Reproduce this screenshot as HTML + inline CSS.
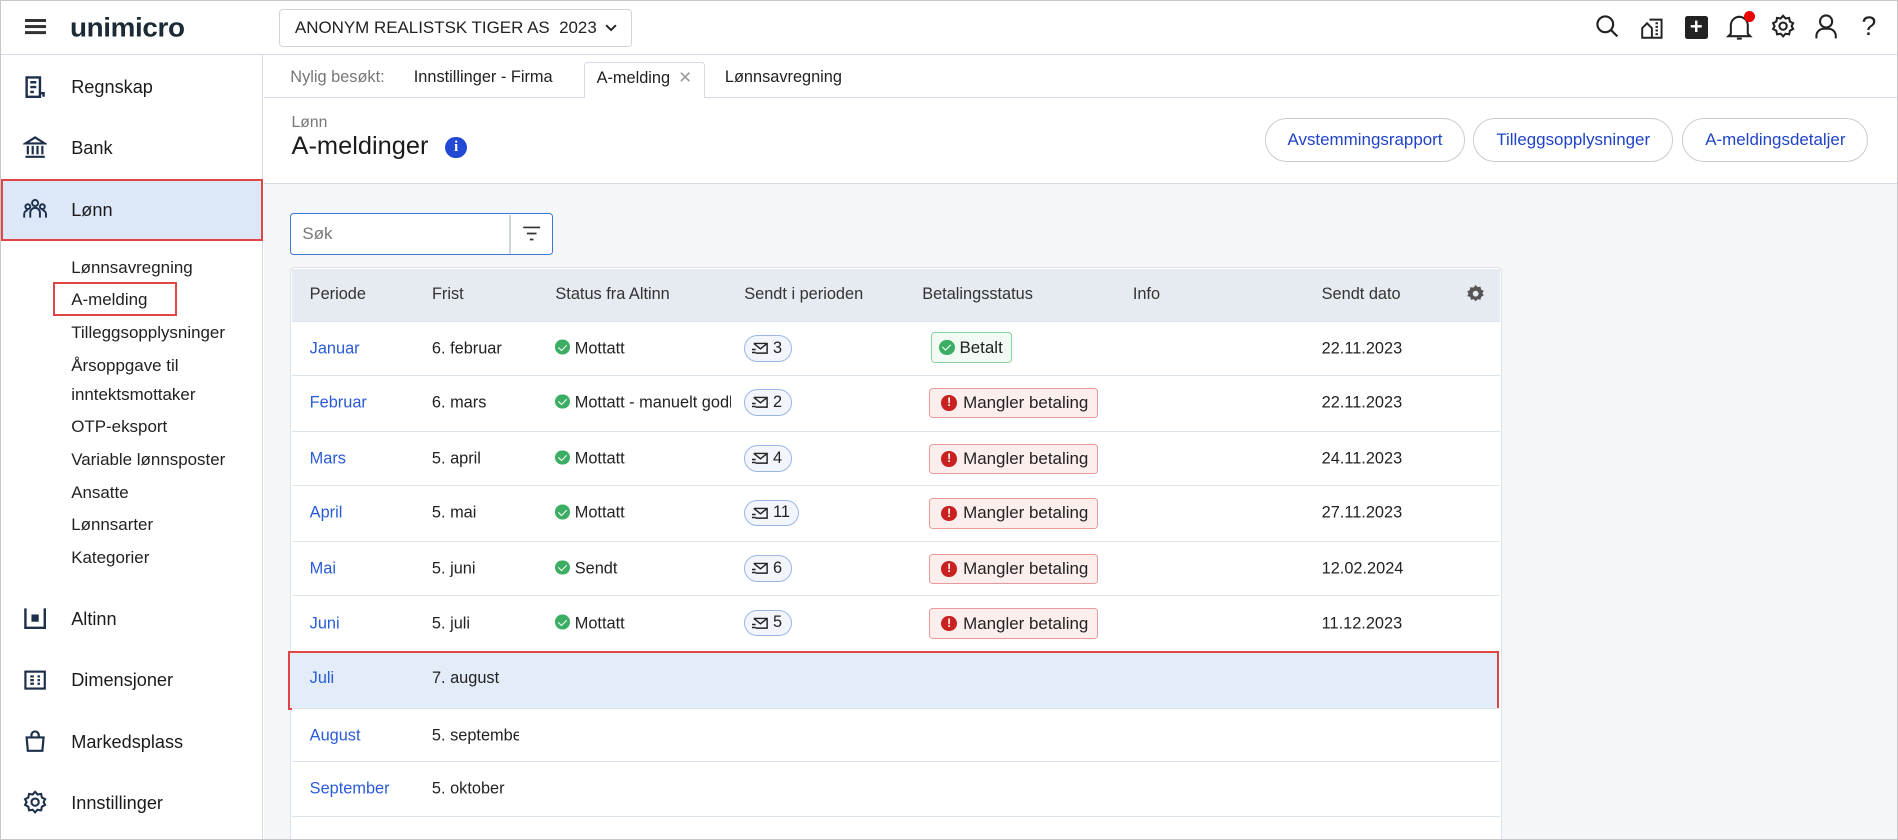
<!DOCTYPE html>
<html><head><meta charset="utf-8"><style>
html,body{margin:0;padding:0;width:1898px;height:840px;overflow:hidden;background:#fff}
#w{zoom:1.2105;width:1568px;height:694px;position:relative;font-family:"Liberation Sans",sans-serif;color:#222;font-size:14px;overflow:hidden;box-sizing:border-box;border:1px solid #c8c8c8}
.a{position:absolute}
.hdr{left:0;top:0;width:1568px;height:44px;border-bottom:1px solid #d5dbe3;background:#fff}
.side{left:0;top:45px;width:216px;height:650px;border-right:1px solid #d5dbe3;background:#fff}
.nav{position:absolute;left:58px;font-size:15px;color:#1b1b1b}
.sub{position:absolute;left:58px;font-size:14px;color:#222}
.ic{position:absolute;left:18px}
.blue{color:#2a5bd7}
.btn{position:absolute;top:97px;height:34px;border:1px solid #c8ccd2;border-radius:18px;color:#2043c8;font-size:14px;line-height:34px;text-align:center;background:#fff}
.th{position:absolute;top:235px;font-size:13.5px;color:#333}
.row{position:absolute;left:240px;width:998px;border-top:1px solid #dde3ea;background:#fff}
.c{position:absolute;font-size:13.5px;top:50%;transform:translateY(-50%);white-space:nowrap}
.ok{display:inline-block;width:12px;height:12px;border-radius:50%;background:#3cae63;vertical-align:-1px;margin-right:4px;position:relative}
.ok:after{content:"";position:absolute;left:4px;top:2px;width:3px;height:6px;border:solid #fff;border-width:0 1.5px 1.5px 0;transform:rotate(45deg)}
.env{position:absolute;height:22px;border:1px solid #9bb6e4;border-radius:11px;background:#f2f6fc;padding:0 7px 0 6px;font-size:13.5px;display:flex;align-items:center;gap:3px;box-sizing:border-box}
.bad{position:absolute;height:25px;border:1px solid #e89a9a;border-radius:3px;background:#fdeeee;padding:0 7px 0 9px;font-size:14px;display:flex;align-items:center;box-sizing:border-box}
.ex{display:inline-block;width:13px;height:13px;border-radius:50%;background:#c92020;color:#fff;font-size:10px;font-weight:bold;text-align:center;line-height:13px;margin-right:5px}
</style></head><body><div id="w">
<div class="a hdr">
 <div class="a" style="left:20px;top:15px;width:17px;height:2px;background:#333;box-shadow:0 5px 0 #333,0 10px 0 #333"></div>
 <div class="a" style="left:57px;top:9px;font-size:23px;font-weight:bold;color:#1b2a35;letter-spacing:-0.3px;transform:scaleY(0.95)">unimicro</div>
 <div class="a" style="left:230px;top:7px;width:290px;height:29px;border:1px solid #cfd4da;border-radius:3px;line-height:29px;font-size:14px;color:#222"><span style="margin-left:12px">ANONYM REALISTSK TIGER AS &nbsp;2023</span><svg style="position:absolute;right:12px;top:11px" width="10" height="7" viewBox="0 0 10 7" fill="none" stroke="#222" stroke-width="1.6"><path d="M1 1l4 4 4-4"/></svg></div>
 <svg class="a" style="left:1317px;top:11px" width="20" height="20" viewBox="0 0 20 20" fill="none" stroke="#222" stroke-width="1.8"><circle cx="8.5" cy="8.5" r="6.5"/><path d="M13.5 13.5l5 5"/></svg>
 <svg class="a" style="left:1355px;top:12px" width="19" height="19" viewBox="0 0 19 19" fill="none" stroke="#222" stroke-width="1.6"><path d="M7 3h10v15H1V10l4-4 4 4v8"/><path d="M12 6h2M12 9h2M12 12h2M12 15h2"/></svg>
 <div class="a" style="left:1391px;top:12px;width:19px;height:19px;background:#222;border-radius:2px;color:#fff;font-size:18px;line-height:18px;text-align:center;font-weight:bold">+</div>
 <svg class="a" style="left:1425px;top:9px" width="22" height="25" viewBox="0 0 22 25" fill="none" stroke="#222" stroke-width="1.7"><path d="M4 18V11a7 7 0 0 1 14 0v7l2 2H2z"/><path d="M9 22h4"/></svg>
 <div class="a" style="left:1440px;top:8px;width:9px;height:9px;border-radius:50%;background:#e00"></div>
 <svg class="a" style="left:1462px;top:11px" width="20" height="20" viewBox="0 0 20 20" fill="none" stroke="#222" stroke-width="1.7"><path d="M10 1.5l2 2.2 3-.5.6 3 2.7 1.4-1.3 2.4 1.3 2.4-2.7 1.4-.6 3-3-.5-2 2.2-2-2.2-3 .5-.6-3L1.7 12.4 3 10 1.7 7.6l2.7-1.4.6-3 3 .5z"/><circle cx="10" cy="10" r="3"/></svg>
 <svg class="a" style="left:1498px;top:10px" width="20" height="22" viewBox="0 0 20 22" fill="none" stroke="#222" stroke-width="1.7"><circle cx="10" cy="7" r="5"/><path d="M2 21v-2a6 6 0 0 1 6-6h4a6 6 0 0 1 6 6v2"/></svg>
 <div class="a" style="left:1537px;top:8px;font-size:22px;color:#222">?</div>
</div>
<div class="a side">
 <svg class="ic" style="top:16px" width="20" height="20" viewBox="0 0 20 20" fill="none" stroke="#1d2f4a" stroke-width="2"><path d="M3 2h11v16H3zM6 6h5M6 10h5M6 14h3M14 15h3v3"/></svg>
 <div class="nav" style="top:18px">Regnskap</div>
 <svg class="ic" style="top:66px" width="20" height="20" viewBox="0 0 20 20" fill="none" stroke="#1d2f4a" stroke-width="1.8"><path d="M2 7l8-5 8 5zM4 9v7M8 9v7M12 9v7M16 9v7M2 18h16"/></svg>
 <div class="nav" style="top:68px">Bank</div>
 <div class="a" style="left:0;top:102px;width:213px;height:48px;background:#dce7f8;border:2px solid #e04646"></div>
 <svg class="ic" style="top:117px" width="20" height="20" viewBox="0 0 20 20" fill="none" stroke="#1d2f4a" stroke-width="1.6"><circle cx="10" cy="5" r="2.5"/><circle cx="4" cy="8" r="2"/><circle cx="16" cy="8" r="2"/><path d="M6 17v-4a4 4 0 0 1 8 0v4M1 17v-3a3 3 0 0 1 3-3M19 17v-3a3 3 0 0 0-3-3"/></svg>
 <div class="nav" style="top:119px">Lønn</div>
 <div class="sub" style="top:167px">Lønnsavregning</div>
 <div class="a" style="left:43px;top:187px;width:99px;height:25px;border:2px solid #e04646"></div>
 <div class="sub" style="top:194px">A-melding</div>
 <div class="sub" style="top:221px">Tilleggsopplysninger</div>
 <div class="sub" style="top:248px">Årsoppgave til</div>
 <div class="sub" style="top:272px">inntektsmottaker</div>
 <div class="sub" style="top:299px">OTP-eksport</div>
 <div class="sub" style="top:326px">Variable lønnsposter</div>
 <div class="sub" style="top:353px">Ansatte</div>
 <div class="sub" style="top:380px">Lønnsarter</div>
 <div class="sub" style="top:407px">Kategorier</div>
 <svg class="ic" style="top:455px" width="20" height="20" viewBox="0 0 20 20" fill="none" stroke="#1d2f4a" stroke-width="2"><path d="M2 2v16h16V2"/><rect x="8" y="8" width="4" height="4" fill="#1d2f4a"/></svg>
 <div class="nav" style="top:457px">Altinn</div>
 <svg class="ic" style="top:506px" width="20" height="20" viewBox="0 0 20 20" fill="none" stroke="#1d2f4a" stroke-width="1.8"><rect x="2" y="3" width="16" height="14"/><path d="M6 7h3M6 10h3M6 13h3M12 7h2M12 10h2M12 13h2"/></svg>
 <div class="nav" style="top:508px">Dimensjoner</div>
 <svg class="ic" style="top:556px" width="20" height="20" viewBox="0 0 20 20" fill="none" stroke="#1d2f4a" stroke-width="1.8"><path d="M3 7h14l-1 11H4zM7 7V5a3 3 0 0 1 6 0v2"/></svg>
 <div class="nav" style="top:559px">Markedsplass</div>
 <svg class="ic" style="top:607px" width="20" height="20" viewBox="0 0 20 20" fill="none" stroke="#1d2f4a" stroke-width="1.7"><path d="M10 1.5l2 2.2 3-.5.6 3 2.7 1.4-1.3 2.4 1.3 2.4-2.7 1.4-.6 3-3-.5-2 2.2-2-2.2-3 .5-.6-3L1.7 12.4 3 10 1.7 7.6l2.7-1.4.6-3 3 .5z"/><circle cx="10" cy="10" r="3"/></svg>
 <div class="nav" style="top:609px">Innstillinger</div>
</div>
<!-- tabs -->
<div class="a" style="left:217px;top:45px;width:1351px;height:34px;border-bottom:1px solid #d5dbe3;background:#fff"></div>
<div class="a" style="left:239px;top:55px;font-size:13.5px;color:#777">Nylig besøkt:</div>
<div class="a" style="left:341px;top:55px;font-size:13.5px">Innstillinger - Firma</div>
<div class="a" style="left:482px;top:50px;width:98px;height:30px;border:1px solid #d5dbe3;border-bottom:none;border-radius:3px 3px 0 0;background:#fff"></div>
<div class="a" style="left:492px;top:55px;font-size:13.5px">A-melding <span style="color:#999;margin-left:3px">✕</span></div>
<div class="a" style="left:598px;top:55px;font-size:13.5px">Lønnsavregning</div>
<!-- page header -->
<div class="a" style="left:217px;top:80px;width:1351px;height:70px;border-bottom:1px solid #d5dbe3;background:#fff"></div>
<div class="a" style="left:240px;top:93px;font-size:13px;color:#777">Lønn</div>
<div class="a" style="left:240px;top:108px;font-size:21px;color:#1b1b1b">A-meldinger</div>
<div class="a" style="left:367px;top:112px;width:18px;height:18px;border-radius:50%;background:#2248d6;color:#fff;font-size:12px;font-weight:bold;text-align:center;line-height:18px;font-family:'Liberation Serif',serif">i</div>
<div class="btn" style="left:1044px;width:164px">Avstemmingsrapport</div>
<div class="btn" style="left:1216px;width:164px">Tilleggsopplysninger</div>
<div class="btn" style="left:1389px;width:152px">A-meldingsdetaljer</div>
<!-- content bg -->
<div class="a" style="left:217px;top:151px;width:1351px;height:543px;background:#f4f6f8"></div>
<div class="a" style="left:239px;top:175px;width:215px;height:33px;border:1.5px solid #3d78d8;border-radius:3px;background:#fff"></div>
<div class="a" style="left:249px;top:184px;font-size:14px;color:#777">Søk</div>
<div class="a" style="left:420px;top:177px;width:1px;height:32px;background:#cfd4da"></div>
<svg class="a" style="left:430px;top:185px" width="16" height="14" viewBox="0 0 16 14" stroke="#333" stroke-width="1.4"><path d="M1 2h14M4 7h8M6.5 12h3"/></svg>
<!-- table -->
<div class="a" style="left:239px;top:220px;width:999px;height:474px;border:1px solid #dde3ea;border-radius:4px 4px 0 0;background:#fff"></div>
<div class="a" style="left:240px;top:221px;width:998px;height:43px;background:#e6eaf1"></div>
<div class="th" style="left:255px">Periode</div><div class="th" style="left:356px">Frist</div><div class="th" style="left:458px">Status fra Altinn</div><div class="th" style="left:614px">Sendt i perioden</div><div class="th" style="left:761px">Betalingsstatus</div><div class="th" style="left:935px">Info</div><div class="th" style="left:1091px">Sendt dato</div>
<svg class="a" style="left:1210px;top:234px" width="16" height="16" viewBox="0 0 20 20" fill="#555"><path d="M10 1l2 2.2 3-.5.6 3 2.7 1.4-1.3 2.4 1.3 2.4-2.7 1.4-.6 3-3-.5-2 2.2-2-2.2-3 .5-.6-3L1.3 12.5 2.6 10 1.3 7.6 4 6.2l.6-3 3 .5z"/><circle cx="10" cy="10" r="3" fill="#e6eaf1"/></svg>

<svg width="0" height="0" style="position:absolute"><defs><symbol id="m" viewBox="0 0 14 12"><path d="M1.5 2h11v8H3M1.5 2l5.5 4.5L12.5 2M0 7h3M0 9.5h3" fill="none" stroke="#222" stroke-width="1.2"/></symbol></defs></svg>

<div class="row" style="top:264px;height:45px"><div class="c blue" style="left:15px">Januar</div><div class="c" style="left:116px">6. februar</div><div class="c" style="left:218px"><span class="ok"></span>Mottatt</div><div class="env" style="left:374px;top:11px"><svg width="14" height="12"><use href="#m"/></svg>3</div><div class="a" style="left:528px;top:9px;height:25px;border:1px solid #8fd0a2;border-radius:3px;background:#f2faf4;padding:0 7px 0 6px;font-size:14px;display:flex;align-items:center;box-sizing:border-box"><span class="ok" style="width:13px;height:13px;vertical-align:0"></span>Betalt</div><div class="c" style="left:851px">22.11.2023</div></div>
<div class="row" style="top:309px;height:45px"><div class="c blue" style="left:15px">Februar</div><div class="c" style="left:116px">6. mars</div><div class="c" style="left:218px;width:145px;overflow:hidden"><span class="ok"></span>Mottatt - manuelt godkjent</div><div class="env" style="left:374px;top:11px"><svg width="14" height="12"><use href="#m"/></svg>2</div><div class="bad" style="left:527px;top:10px"><span class="ex">!</span>Mangler betaling</div><div class="c" style="left:851px">22.11.2023</div></div>
<div class="row" style="top:355px;height:45px"><div class="c blue" style="left:15px">Mars</div><div class="c" style="left:116px">5. april</div><div class="c" style="left:218px"><span class="ok"></span>Mottatt</div><div class="env" style="left:374px;top:11px"><svg width="14" height="12"><use href="#m"/></svg>4</div><div class="bad" style="left:527px;top:10px"><span class="ex">!</span>Mangler betaling</div><div class="c" style="left:851px">24.11.2023</div></div>
<div class="row" style="top:400px;height:45px"><div class="c blue" style="left:15px">April</div><div class="c" style="left:116px">5. mai</div><div class="c" style="left:218px"><span class="ok"></span>Mottatt</div><div class="env" style="left:374px;top:11px"><svg width="14" height="12"><use href="#m"/></svg>11</div><div class="bad" style="left:527px;top:10px"><span class="ex">!</span>Mangler betaling</div><div class="c" style="left:851px">27.11.2023</div></div>
<div class="row" style="top:446px;height:45px"><div class="c blue" style="left:15px">Mai</div><div class="c" style="left:116px">5. juni</div><div class="c" style="left:218px"><span class="ok"></span>Sendt</div><div class="env" style="left:374px;top:11px"><svg width="14" height="12"><use href="#m"/></svg>6</div><div class="bad" style="left:527px;top:10px"><span class="ex">!</span>Mangler betaling</div><div class="c" style="left:851px">12.02.2024</div></div>
<div class="row" style="top:491px;height:45px"><div class="c blue" style="left:15px">Juni</div><div class="c" style="left:116px">5. juli</div><div class="c" style="left:218px"><span class="ok"></span>Mottatt</div><div class="env" style="left:374px;top:11px"><svg width="14" height="12"><use href="#m"/></svg>5</div><div class="bad" style="left:527px;top:10px"><span class="ex">!</span>Mangler betaling</div><div class="c" style="left:851px">11.12.2023</div></div>
<div class="a" style="left:237px;top:537px;width:997px;height:45px;background:#e3edf9;border:2px solid #e04646"></div>
<div class="a blue" style="left:255px;top:552px;font-size:13.5px">Juli</div><div class="a" style="left:356px;top:552px;font-size:13.5px">7. august</div>
<div class="row" style="top:584px;height:44px"><div class="c blue" style="left:15px">August</div><div class="c" style="left:116px;width:72px;overflow:hidden">5. september</div></div>
<div class="row" style="top:628px;height:45px"><div class="c blue" style="left:15px">September</div><div class="c" style="left:116px">5. oktober</div></div>
<div class="row" style="top:673px;height:30px"></div>
</div></body></html>
